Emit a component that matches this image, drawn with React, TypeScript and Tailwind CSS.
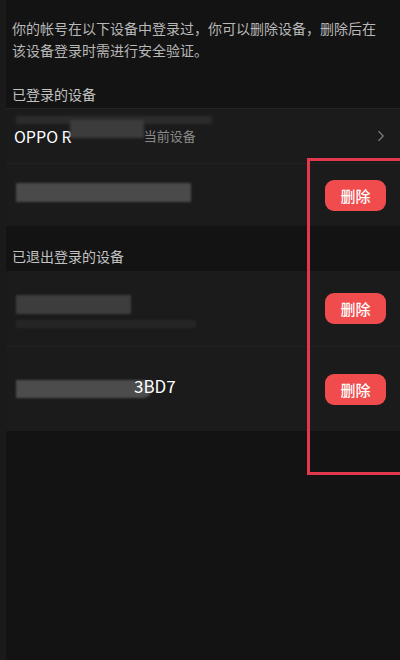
import { ChevronRight } from 'lucide-react';

function DeleteButton() {
    return (
        <button className="w-[61px] h-[31px] rounded-[9px] bg-[#f04b4d] text-white text-[15px] font-medium leading-none flex items-center justify-center">
            删除
        </button>
    );
}

export default function App() {
    return (
        <div
            className="relative w-[400px] h-[660px] bg-[#131313] border-l-[6px] border-[#1a1a1a] overflow-hidden"
            style={{ fontFamily: '"Noto Sans CJK SC", "Noto Sans", sans-serif' }}
        >
            {/* intro */}
            <p className="pt-[17px] pl-[6px] pr-2 text-[14px] leading-[22px] text-[#b8b8b8] whitespace-nowrap">
                你的帐号在以下设备中登录过，你可以删除设备，删除后在
                <br />
                该设备登录时需进行安全验证。
            </p>

            <div className="mt-[22px] pl-[6px] text-[14px] leading-[22px] text-[#c2c2c2]">已登录的设备</div>

            {/* logged in */}
            <div className="mt-[3px] bg-[#1b1b1b] border-t border-[#242424]">
                <div className="h-[54px] flex items-center pl-[8px] pr-[10px]">
                    <div className="relative flex items-center flex-1">
                        <span className="text-[16px] text-white">OPPO R</span>
                        <div className="absolute left-[2px] top-[-8px] w-[196px] h-[8px] bg-[#2c2c2c] blur-[1.5px]" />
                        <div className="absolute left-[56px] top-[-4px] w-[74px] h-[18px] bg-[#3c3c3c] blur-[1.5px]" />
                        <span className="ml-[72px] text-[13px] text-[#8a8a8a] relative">当前设备</span>
                    </div>
                    <ChevronRight size={18} strokeWidth={1.5} className="text-[#808080]" />
                </div>
                <div className="h-[63px] flex items-center justify-between pl-[10px] pr-[14px] border-t border-[#202020]">
                    <div className="w-[175px] h-[19px] mb-[6px] bg-[#4a4a4a] blur-[1px]" />
                    <DeleteButton />
                </div>
            </div>

            <div className="mt-[19px] pl-[6px] text-[14px] leading-[22px] text-[#c2c2c2]">已退出登录的设备</div>

            {/* logged out */}
            <div className="mt-[4px] bg-[#1b1b1b]">
                <div className="h-[75px] flex items-center justify-between pl-[10px] pr-[14px]">
                    <div className="flex flex-col gap-[6px] pt-[6px]">
                        <div className="w-[115px] h-[19px] bg-[#3d3d3d] blur-[1px]" />
                        <div className="w-[180px] h-[8px] bg-[#252525] blur-[1px]" />
                    </div>
                    <DeleteButton />
                </div>
                <div className="h-[85px] flex items-start justify-between pl-[10px] pr-[14px] pt-[27px] border-t border-[#202020]">
                    <div className="relative flex items-center h-[24px]">
                        <div className="w-[136px] h-[18px] mt-[6px] rounded-r-full bg-[#4c4c4c] blur-[1px]" />
                        <span className="ml-[-18px] text-[17px] text-white relative">3BD7</span>
                    </div>
                    <DeleteButton />
                </div>
            </div>

            {/* annotation box */}
            <div className="absolute left-[301px] top-[158px] w-[96px] h-[317px] border-[3px] border-[#e2384b]" />
        </div>
    );
}
